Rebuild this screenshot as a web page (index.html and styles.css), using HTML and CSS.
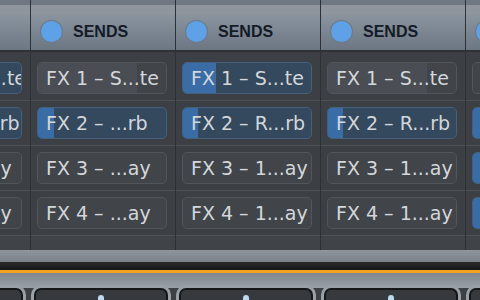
FILE: index.html
```html
<!DOCTYPE html>
<html lang="en">
<head>
    <meta charset="UTF-8">
    <title>Mixer - Sends</title>
    <link rel="stylesheet" href="styles.css">
</head>
<body>
    <div class="mixer">
        <!-- strip 0 (cut off on the left) -->
        <div class="strip">
            <div class="strip-main">
                <div class="strip-top"></div>
                <div class="strip-band"></div>
                <div class="strip-head"><span class="led"></span><span class="head-label">SENDS</span></div>
                <div class="sends">
                    <div class="send-row"><div class="slot slot-on"><span class="slot-name">FX 1 – Sp...te</span></div></div>
                    <div class="send-row"><div class="slot slot-on"><span class="slot-name">FX 2 – Rv..rb</span></div></div>
                    <div class="send-row"><div class="slot"><span class="slot-name">FX 3 – 1..ay</span></div></div>
                    <div class="send-row"><div class="slot"><span class="slot-name">FX 4 – 1..ay</span></div></div>
                </div>
                <div class="strip-foot"></div>
            </div>
            <div class="rail-light"></div>
            <div class="rail-dark"></div>
            <div class="rail-orange"></div>
            <div class="rail-grey"></div>
            <div class="pan-box"><span class="pan-dot"></span></div>
        </div>

        <!-- strip 1 -->
        <div class="strip">
            <div class="strip-main">
                <div class="strip-top"></div>
                <div class="strip-band"></div>
                <div class="strip-head"><span class="led"></span><span class="head-label">SENDS</span></div>
                <div class="sends">
                    <div class="send-row"><div class="slot"><span class="slot-fill fill-grey" style="width: 77%"></span><span class="slot-name">FX 1 – S...te</span></div></div>
                    <div class="send-row"><div class="slot slot-on"><span class="slot-fill" style="width: 16px"></span><span class="slot-name">FX 2 – ...rb</span></div></div>
                    <div class="send-row"><div class="slot"><span class="slot-name">FX 3 – ...ay</span></div></div>
                    <div class="send-row"><div class="slot"><span class="slot-name">FX 4 – ...ay</span></div></div>
                </div>
                <div class="strip-foot"></div>
            </div>
            <div class="rail-light"></div>
            <div class="rail-dark"></div>
            <div class="rail-orange"></div>
            <div class="rail-grey"></div>
            <div class="pan-box"><span class="pan-dot"></span></div>
        </div>

        <!-- strip 2 -->
        <div class="strip">
            <div class="strip-main">
                <div class="strip-top"></div>
                <div class="strip-band"></div>
                <div class="strip-head"><span class="led"></span><span class="head-label">SENDS</span></div>
                <div class="sends">
                    <div class="send-row"><div class="slot slot-on"><span class="slot-fill" style="width: 33px"></span><span class="slot-name">FX 1 – S...te</span></div></div>
                    <div class="send-row"><div class="slot slot-on"><span class="slot-fill" style="width: 15px"></span><span class="slot-name">FX 2 – R...rb</span></div></div>
                    <div class="send-row"><div class="slot"><span class="slot-name">FX 3 – 1...ay</span></div></div>
                    <div class="send-row"><div class="slot"><span class="slot-name">FX 4 – 1...ay</span></div></div>
                </div>
                <div class="strip-foot"></div>
            </div>
            <div class="rail-light"></div>
            <div class="rail-dark"></div>
            <div class="rail-orange"></div>
            <div class="rail-grey"></div>
            <div class="pan-box"><span class="pan-dot"></span></div>
        </div>

        <!-- strip 3 -->
        <div class="strip">
            <div class="strip-main">
                <div class="strip-top"></div>
                <div class="strip-band"></div>
                <div class="strip-head"><span class="led"></span><span class="head-label">SENDS</span></div>
                <div class="sends">
                    <div class="send-row"><div class="slot"><span class="slot-fill fill-grey" style="width: 77%"></span><span class="slot-name">FX 1 – S...te</span></div></div>
                    <div class="send-row"><div class="slot slot-on"><span class="slot-fill" style="width: 15px"></span><span class="slot-name">FX 2 – R...rb</span></div></div>
                    <div class="send-row"><div class="slot"><span class="slot-name">FX 3 – 1...ay</span></div></div>
                    <div class="send-row"><div class="slot"><span class="slot-name">FX 4 – 1...ay</span></div></div>
                </div>
                <div class="strip-foot"></div>
            </div>
            <div class="rail-light"></div>
            <div class="rail-dark"></div>
            <div class="rail-orange"></div>
            <div class="rail-grey"></div>
            <div class="pan-box"><span class="pan-dot"></span></div>
        </div>

        <!-- strip 4 (cut off on the right) -->
        <div class="strip">
            <div class="strip-main">
                <div class="strip-top"></div>
                <div class="strip-band"></div>
                <div class="strip-head"><span class="led"></span><span class="head-label">SENDS</span></div>
                <div class="sends">
                    <div class="send-row"><div class="slot"><span class="slot-name">FX 1 – S...te</span></div></div>
                    <div class="send-row"><div class="slot slot-on"><span class="slot-fill" style="width: 60px"></span><span class="slot-name">FX 2 – R...rb</span></div></div>
                    <div class="send-row"><div class="slot slot-on"><span class="slot-fill" style="width: 60px"></span><span class="slot-name">FX 3 – 1...ay</span></div></div>
                    <div class="send-row"><div class="slot slot-on"><span class="slot-fill" style="width: 60px"></span><span class="slot-name">FX 4 – 1...ay</span></div></div>
                </div>
                <div class="strip-foot"></div>
            </div>
            <div class="rail-light"></div>
            <div class="rail-dark"></div>
            <div class="rail-orange"></div>
            <div class="rail-grey"></div>
            <div class="pan-box"><span class="pan-dot"></span></div>
        </div>
    </div>
</body>
</html>
```

FILE: styles.css
```css
* {
    margin: 0;
    padding: 0;
    box-sizing: border-box;
}

body {
    width: 480px;
    height: 300px;
    overflow: hidden;
    background: #3d4045;
    font-family: 'DejaVu Sans', 'Liberation Sans', sans-serif;
}

.mixer {
    display: flex;
    margin-left: -115px;
}

.strip {
    flex: none;
    width: 145px;
    display: flex;
    flex-direction: column;
}

.strip-main {
    border-left: 1px solid #2d3034;
    box-shadow: inset 1px 0 0 #52565b;
}

.strip-top {
    height: 5px;
    background: #6f7882;
}

.strip-band {
    height: 10px;
    background: #8e959c;
}

.strip-head {
    height: 37px;
    display: flex;
    align-items: center;
    gap: 11px;
    padding: 0 0 2px 10px;
    background: linear-gradient(#8a949f, #6d7783);
    border-bottom: 2px solid #2e3135;
}

.led {
    width: 21px;
    height: 21px;
    border-radius: 50%;
    background: #5ea1e6;
    box-shadow: 0 0 0 1px #6c7a8a;
}

.head-label {
    font-family: 'Liberation Sans', Arial, sans-serif;
    font-weight: 700;
    font-size: 16px;
    color: #141b27;
}

.sends {
    padding-top: 4px;
    background: #3c3f44;
}

.send-row {
    height: 45px;
    padding-top: 6px;
    border-bottom: 1px solid #4f5358;
}

.slot {
    position: relative;
    height: 32px;
    margin: 0 8px 0 6px;
    display: flex;
    align-items: center;
    padding-left: 8px;
    overflow: hidden;
    white-space: nowrap;
    border-radius: 5px;
    background: #414449;
    border: 1px solid #52565c;
}

.slot-on {
    background: #34485e;
    border-color: #45607e;
}

.slot-fill {
    position: absolute;
    left: 0;
    top: 0;
    bottom: 0;
    background: #3a6ca6;
}

.fill-grey {
    background: #4a4e54;
}

.slot-name {
    position: relative;
    font-size: 19px;
    color: #d3d7db;
}

.strip-foot {
    height: 14px;
    background: #404347;
}

.rail-light {
    height: 12px;
    background: linear-gradient(#8d949c, #7b828a);
}

.rail-dark {
    height: 8px;
    background: linear-gradient(#2a2b2d, #161718);
}

.rail-orange {
    height: 3px;
    background: #f3a21f;
}

.rail-grey {
    height: 15px;
    background: linear-gradient(#7f868e, #99a0a8);
}

.pan-box {
    height: 12px;
    display: flex;
    justify-content: center;
    padding-top: 5px;
    margin: 0 7px 0 4px;
    border: 2px solid #161718;
    border-bottom: none;
    border-radius: 7px 7px 0 0;
    background: #36393d;
    box-shadow: 0 0 0 3px #99a0a8;
}

.pan-dot {
    width: 6px;
    height: 8px;
    border-radius: 3px 3px 0 0;
    background: #bcd9ee;
}
```
